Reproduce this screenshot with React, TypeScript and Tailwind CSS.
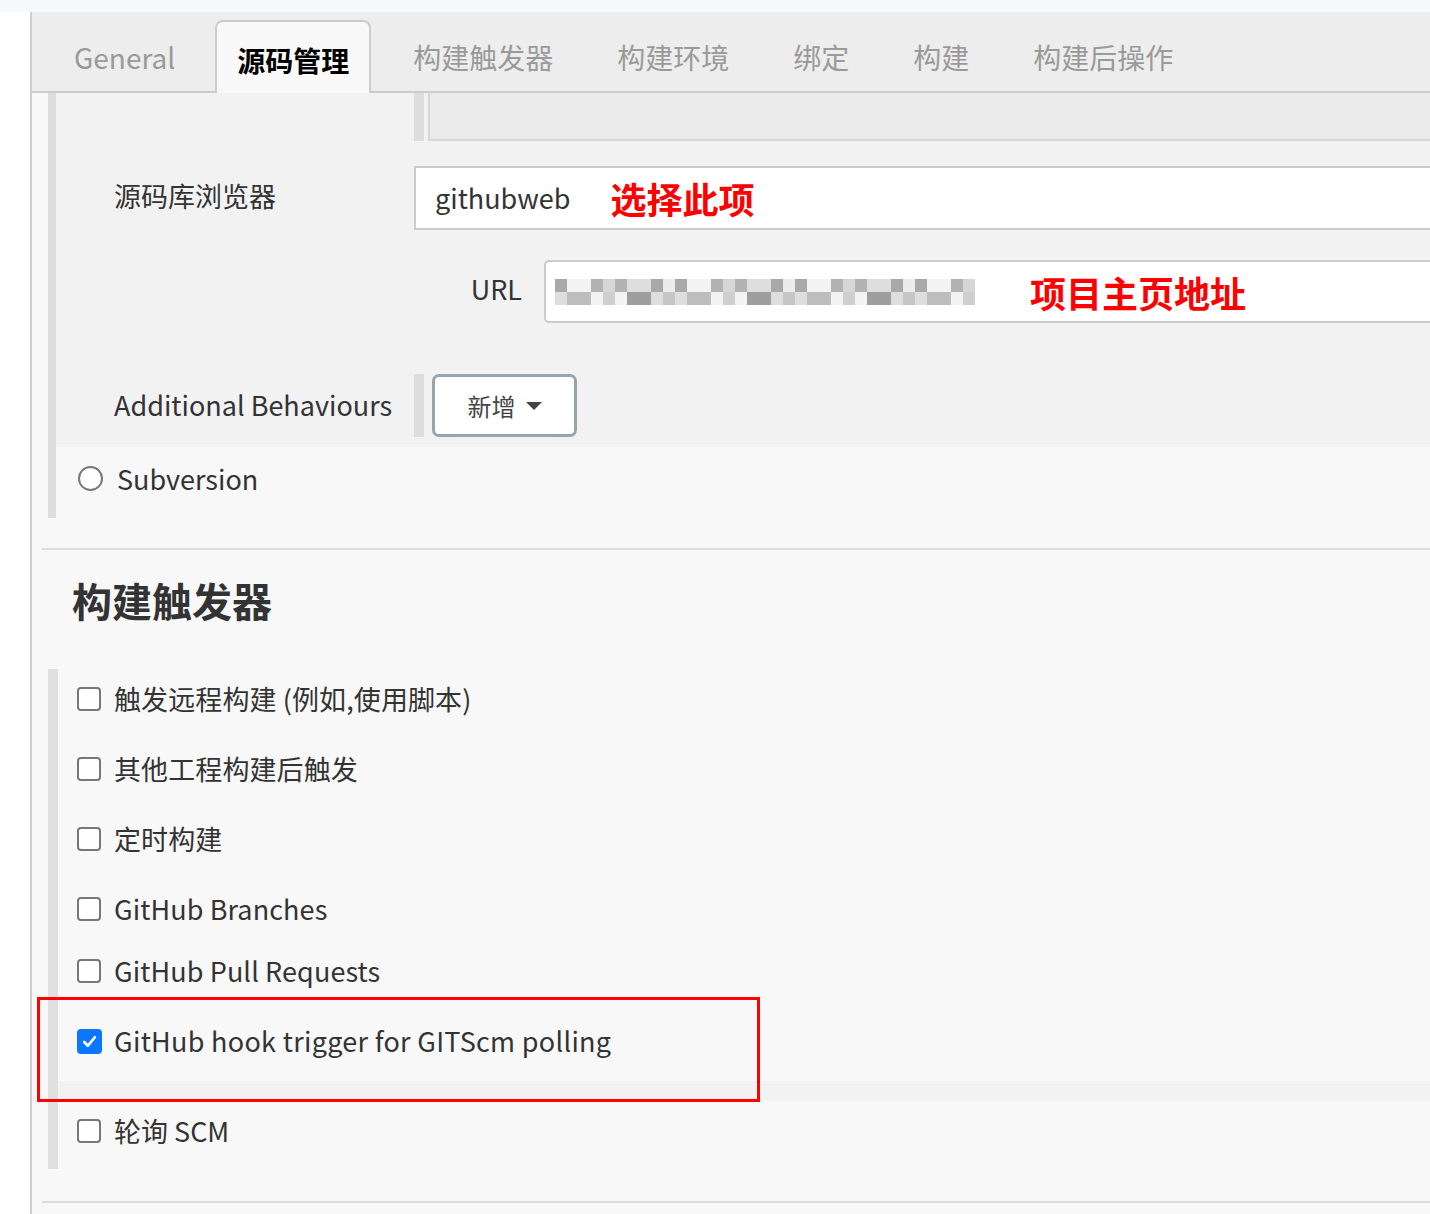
import React from "react";

const FONT = { fontFamily: '"Noto Sans CJK SC", "Noto Sans", sans-serif' };

const TABS = ["General", "源码管理", "构建触发器", "构建环境", "绑定", "构建", "构建后操作"];

const TRIGGERS = [
  { label: "触发远程构建 (例如,使用脚本)", h: "h-[70px]" },
  { label: "其他工程构建后触发", h: "h-[70px]" },
  { label: "定时构建", h: "h-[70px]" },
  { label: "GitHub Branches", h: "h-[62px]" },
  { label: "GitHub Pull Requests", h: "h-[70px]" },
];

// pixelated (blurred) url text, drawn as blocks
const GRAYS = ["#a9a9a9", "#bdbdbd", "#cfcfcf", "#dedede", "#ececec", "#b3b3b3", "#9e9e9e", "#c6c6c6", "#f3f3f3", "#d6d6d6"];

function Pixelated() {
  const cells = [];
  for (let r = 0; r < 2; r++) {
    for (let c = 0; c < 35; c++) {
      const idx = (c * 7 + r * 3 + ((c * c) % 5)) % GRAYS.length;
      cells.push(
        <rect key={r + "-" + c} x={c * 12} y={r * 13} width={12} height={13} fill={GRAYS[idx]} />
      );
    }
  }
  return (
    <svg width={420} height={26} viewBox="0 0 420 26" className="block">
      {cells}
    </svg>
  );
}

function Checkbox({ checked }: { checked?: boolean }) {
  if (checked) {
    return (
      <span className="flex h-[25px] w-[25px] shrink-0 items-center justify-center rounded-[4px] bg-[#0b76ff]">
        <svg width="17" height="17" viewBox="0 0 16 16">
          <path d="M3 8.5 L6.5 12 L13 4" fill="none" stroke="#fff" strokeWidth="2.6" strokeLinecap="round" strokeLinejoin="round" />
        </svg>
      </span>
    );
  }
  return <span className="block h-[24px] w-[24px] shrink-0 rounded-[4px] border-2 border-[#777] bg-white" />;
}

export default function App() {
  return (
    <div className="min-h-screen bg-white text-[#333]" style={FONT}>
      <div className="h-[12px] bg-[#f7f8fa]" />
      <div className="flex">
        <div className="w-[30px] shrink-0 bg-white" />
        <div className="min-h-[1202px] flex-1 overflow-hidden border-l-2 border-[#cfcfcf] bg-[#f8f8f8]">
          {/* tabs */}
          <div className="flex h-[81px] items-end border-b-2 border-[#cccccc] bg-[#ededed] pl-[20px]">
            {TABS.map((t, i) =>
              i === 1 ? (
                <div
                  key={t}
                  className="relative top-[2px] mr-[20px] flex h-[73px] items-center rounded-t-[8px] border-2 border-b-0 border-[#cccccc] bg-[#f9f9f9] px-[20px] pt-[4px] text-[28px] font-bold text-black"
                >
                  {t}
                </div>
              ) : (
                <div
                  key={t}
                  className={
                    "flex h-[73px] items-center pl-[22px] pt-[4px] text-[28px] text-[#9a9a9a] " +
                    (i === 0 ? "mr-[20px] pr-[20px]" : "mr-[20px] pr-[22px]")
                  }
                >
                  {t}
                </div>
              )
            )}
          </div>

          {/* source control section */}
          <div className="ml-[16px] border-l-[8px] border-[#dddddd]">
            <div className="h-[354px] bg-[#f2f2f2]">
              {/* partial row above */}
              <div className="flex h-[48px]">
                <div className="w-[358px] shrink-0" />
                <div className="w-[10px] bg-[#dddddd]" />
                <div className="ml-[4px] flex-1 border-b-2 border-l-2 border-[#d6d6d6] bg-[#ebebeb]" />
              </div>

              {/* repo browser */}
              <div className="mt-[25px] flex h-[64px] items-center">
                <div className="w-[358px] shrink-0 pb-[4px] pl-[58px] text-[27px] text-[#333]">源码库浏览器</div>
                <div className="flex h-full flex-1 items-center border-2 border-r-0 border-[#cccccc] bg-white pl-[19px]">
                  <span className="text-[27px] text-[#333]">githubweb</span>
                  <span className="ml-[40px] text-[36px] font-bold text-[#ff0000]">选择此项</span>
                </div>
              </div>

              {/* url */}
              <div className="mt-[30px] flex h-[63px] items-center">
                <div className="w-[358px] shrink-0" />
                <div className="w-[108px] shrink-0 pb-[4px] text-right text-[27px] text-[#333]">URL</div>
                <div className="ml-[22px] flex h-full flex-1 items-center rounded-l-[5px] border-2 border-r-0 border-[#cccccc] bg-white pl-[9px]">
                  <Pixelated />
                  <span className="ml-[55px] text-[36px] font-bold text-[#ff0000]">项目主页地址</span>
                </div>
              </div>

              {/* additional behaviours */}
              <div className="mt-[51px] flex h-[63px] items-center">
                <div className="w-[358px] shrink-0 pl-[58px] text-[27px] text-[#333]">Additional Behaviours</div>
                <div className="h-full w-[10px] bg-[#dddddd]" />
                <button className="ml-[8px] flex h-full w-[145px] items-center justify-center gap-[10px] rounded-[7px] border-[3px] border-[#97a5ae] bg-white text-[24px] text-[#444]">
                  <span>新增</span>
                  <svg width="16" height="10" viewBox="0 0 16 10">
                    <path d="M0 1 L16 1 L8 9 Z" fill="#444" />
                  </svg>
                </button>
              </div>
            </div>

            {/* subversion */}
            <div className="flex h-[71px] items-start pt-[19px] pl-[22px]">
              <span className="block h-[25px] w-[25px] shrink-0 rounded-full border-2 border-[#777] bg-white" />
              <span className="ml-[14px] text-[27px] leading-[25px] text-[#333]">Subversion</span>
            </div>
          </div>

          <div className="ml-[10px] mt-[30px] border-t-2 border-[#dddddd]" />

          {/* build triggers */}
          <div className="h-[119px] pl-[40px] pt-[26px] text-[40px] font-bold leading-[48px] text-[#333]">构建触发器</div>

          <div className="ml-[16px] border-l-[10px] border-[#e0e0e0]">
            {TRIGGERS.map((t) => (
              <div key={t.label} className={"flex items-start pt-[18px] pl-[19px] " + t.h}>
                <Checkbox />
                <span className="ml-[13px] text-[27px] leading-[24px] tracking-[0.1px] text-[#333]">{t.label}</span>
              </div>
            ))}
            <div className="relative">
              <div className="flex h-[70px] items-start pt-[18px] pl-[19px]">
                <Checkbox checked />
                <span className="ml-[12px] text-[27px] leading-[24px] tracking-[0.3px] text-[#333]">
                  GitHub hook trigger for GITScm polling
                </span>
              </div>
              <div className="h-[20px] bg-[#f2f2f2]" />
              <div className="absolute left-[-21px] top-[-14px] h-[105px] w-[723px] border-[3px] border-[#ff0000]" />
            </div>
            <div className="flex h-[68px] items-start pt-[18px] pl-[19px]">
              <Checkbox />
              <span className="ml-[13px] text-[27px] leading-[24px] text-[#333]">轮询 SCM</span>
            </div>
          </div>

          <div className="ml-[10px] mt-[32px] border-t-2 border-[#dddddd]" />
        </div>
      </div>
    </div>
  );
}
